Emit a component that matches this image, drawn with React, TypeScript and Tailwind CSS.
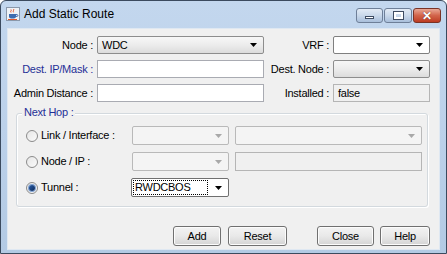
import React from 'react';

type ComboKind = 'glass' | 'white' | 'disabled' | 'focus';

function Arrow({ color = '#000' }: { color?: string }) {
  return (
    <svg width="7" height="4" viewBox="0 0 7 4" className="shrink-0">
      <path d="M0 0h7L3.5 4z" fill={color} />
    </svg>
  );
}

function Combo({ kind, value, className = '' }: { kind: ComboKind; value?: string; className?: string }) {
  const skin: Record<ComboKind, string> = {
    glass: 'border-[#8d8d8d] bg-gradient-to-b from-[#f7f7f7] via-[#ececec] to-[#dcdcdc]',
    white: 'border-[#7f7f7f] bg-white',
    disabled: 'border-[#b9b9b9] bg-[#f4f4f4]',
    focus: 'border-[#6f6f6f] bg-white',
  };
  return (
    <div className={`flex items-center h-full rounded-[2px] border ${skin[kind]} ${className}`}>
      {kind === 'focus' ? (
        <div className="flex-1 h-full p-[1px]">
          <div className="h-full border border-dotted border-black flex items-center pl-[1px] text-black">{value}</div>
        </div>
      ) : (
        <div className="flex-1 pl-[4px] text-black truncate">{value}</div>
      )}
      <div className="w-[19px] flex justify-center">
        <Arrow color={kind === 'disabled' ? '#a8a8a8' : '#000'} />
      </div>
    </div>
  );
}

function Field({ value, disabled }: { value?: string; disabled?: boolean }) {
  return (
    <div
      className={`h-full border flex items-center pl-[4px] ${
        disabled ? 'bg-[#f0f0f0] border-[#b5b5b5]' : 'bg-white border-[#a9abb2]'
      }`}
    >
      {value}
    </div>
  );
}

function Radio({ checked }: { checked?: boolean }) {
  return (
    <div className="w-[12px] h-[12px] rounded-full border border-[#8b8b8b] bg-gradient-to-br from-[#e6e6e6] to-[#fafafa] flex items-center justify-center shrink-0">
      {checked && <div className="w-[6px] h-[6px] rounded-full bg-gradient-to-br from-[#2a5ea8] to-[#0d2a5c] ring-1 ring-[#7fa2d2]" />}
    </div>
  );
}

function Btn({ label, w }: { label: string; w: string }) {
  return (
    <button
      className={`${w} h-[20px] rounded-[3px] border border-[#707070] bg-gradient-to-b from-[#f3f3f3] via-[#e9e9e9] to-[#d4d4d4] text-[11px] text-black flex items-center justify-center shadow-[inset_0_0_0_1px_#fcfcfc]`}
    >
      {label}
    </button>
  );
}

function JavaIcon() {
  return (
    <svg width="14" height="14" viewBox="0 0 14 14">
      <rect x="0.5" y="0.5" width="13" height="13" fill="#eef2f7" stroke="#8a98ab" />
      <path d="M5 2.5c1 1-1 1.5 0 3M7.5 2c1 1.2-1 1.8 0 3.3" stroke="#e2562a" fill="none" strokeWidth="1" />
      <path d="M3 7h7v2.5c0 1.2-1 2-2.2 2H5.2C4 11.5 3 10.7 3 9.5z" fill="#3d6cb0" />
      <path d="M10 7.6h1.2c.9 0 .9 1.8 0 1.8H10" stroke="#3d6cb0" fill="none" />
      <rect x="2" y="12" width="9" height="1" fill="#e2562a" />
    </svg>
  );
}

export default function App() {
  const blue = 'text-[#1f2f97]';
  return (
    <div className="w-[447px] h-[254px] border border-[#3b4a5e] rounded-t-[6px] bg-gradient-to-b from-[#c3d7ee] via-[#bcd1ea] to-[#b3cae4] flex flex-col overflow-hidden font-['Liberation_Sans',Arial,sans-serif] text-[11px] tracking-[-0.25px] text-black">
      {/* title bar */}
      <div className="h-[27px] shrink-0 flex items-start justify-between pl-[5px] pr-[5px]">
        <div className="flex items-center gap-[4px] pt-[6px]">
          <JavaIcon />
          <span className="text-[12px] tracking-normal text-black leading-none">Add Static Route</span>
        </div>
        <div className="flex gap-[1px] pt-[7px]">
          <div className="w-[27px] h-[15px] rounded-[3px] border border-[#6e7f98] bg-gradient-to-b from-[#e3ebf5] via-[#c9d8ea] to-[#a9bfdb] flex items-center justify-center">
            <div className="w-[9px] h-[3px] bg-white border border-[#3e4c62] mt-[4px]" />
          </div>
          <div className="w-[28px] h-[15px] rounded-[3px] border border-[#6e7f98] bg-gradient-to-b from-[#e3ebf5] via-[#c9d8ea] to-[#a9bfdb] flex items-center justify-center">
            <div className="w-[9px] h-[7px] border-2 border-white outline outline-1 outline-[#3e4c62]" />
          </div>
          <div className="w-[28px] h-[15px] rounded-[3px] border border-[#7a3326] bg-gradient-to-b from-[#e8a795] via-[#d2644a] to-[#bd3b22] flex items-center justify-center">
            <span className="text-white font-bold text-[12px] leading-none [text-shadow:0_0_1px_#4a1208]">✕</span>
          </div>
        </div>
      </div>

      {/* client area */}
      <div className="flex-1 mx-[6px] mb-[3px] bg-[#f0f0f0] border border-[#dfe8f2] flex flex-col">
        <div className="grid grid-cols-[89px_167px_69px_97px] auto-rows-[18px] gap-y-[6px] pt-[7px]">
          <div className="text-right pr-[4px] self-center">Node :</div>
          <Combo kind="glass" value="WDC" />
          <div className="text-right pr-[4px] self-center">VRF :</div>
          <Combo kind="white" />

          <div className={`text-right pr-[4px] self-center ${blue}`}>Dest. IP/Mask :</div>
          <Field />
          <div className="text-right pr-[4px] self-center">Dest. Node :</div>
          <Combo kind="glass" />

          <div className="text-right pr-[4px] self-center">Admin Distance :</div>
          <Field />
          <div className="text-right pr-[4px] self-center">Installed :</div>
          <Field value="false" disabled />
        </div>

        {/* Next Hop group */}
        <div className="relative mt-[11px] ml-[8px] w-[412px] h-[94px] rounded-[3px] border border-[#d3d9de] shadow-[inset_1px_1px_0_#ffffff,1px_1px_0_#ffffff]">
          <span className={`absolute -top-[7px] left-[5px] px-[2px] bg-[#f0f0f0] leading-none ${blue}`}>Next Hop :</span>
          <div className="grid grid-cols-[100px_97px_187px] gap-x-[6px] auto-rows-[19px] gap-y-[7px] pl-[9px] pt-[12px]">
            <div className="flex items-center gap-[3px]">
              <Radio />
              <span>Link / Interface :</span>
            </div>
            <Combo kind="disabled" />
            <Combo kind="disabled" />

            <div className="flex items-center gap-[3px]">
              <Radio />
              <span>Node / IP :</span>
            </div>
            <Combo kind="disabled" />
            <Field disabled />

            <div className="flex items-center gap-[3px]">
              <Radio checked />
              <span>Tunnel :</span>
            </div>
            <Combo kind="focus" value="RWDCBOS" className="-ml-[1px] h-[21px]" />
            <div />
          </div>
        </div>

        {/* buttons */}
        <div className="mt-[19px] flex justify-end pr-[9px]">
          <Btn label="Add" w="w-[48px]" />
          <div className="ml-[7px]">
            <Btn label="Reset" w="w-[59px]" />
          </div>
          <div className="ml-[30px]">
            <Btn label="Close" w="w-[57px]" />
          </div>
          <div className="ml-[6px]">
            <Btn label="Help" w="w-[50px]" />
          </div>
        </div>
      </div>
    </div>
  );
}
